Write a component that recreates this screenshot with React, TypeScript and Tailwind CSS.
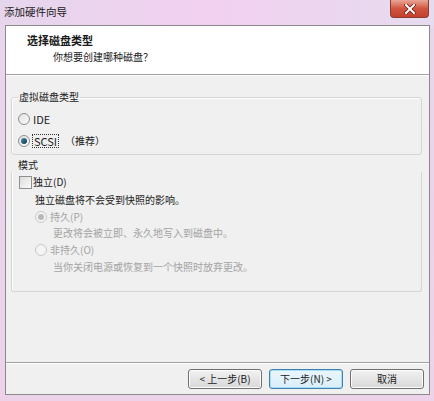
import type { ReactNode } from 'react';

const font = { fontFamily: '"Noto Sans CJK SC", "Noto Sans", sans-serif' };

function Radio({ checked, disabled }: { checked?: boolean; disabled?: boolean }) {
    return (
        <span
            className={`w-[12px] h-[12px] rounded-full border flex items-center justify-center shrink-0 ${
                disabled
                    ? 'border-[#c8c8c8] bg-[#f4f4f4]'
                    : 'border-[#8f8f8f] bg-gradient-to-br from-[#e2e2e2] to-[#fafafa]'
            }`}
        >
            {checked && (
                <span
                    className={`w-[6px] h-[6px] rounded-full ${
                        disabled ? 'bg-[#b8b8b8]' : 'bg-gradient-to-br from-[#4a8aa8] to-[#0f3a52]'
                    }`}
                />
            )}
        </span>
    );
}

function Row({ children, className = '' }: { children: ReactNode; className?: string }) {
    return <div className={`flex items-center h-[14px] ${className}`}>{children}</div>;
}

function Button({ children, focused }: { children: ReactNode; focused?: boolean }) {
    return (
        <button
            className={`w-[74px] h-[20px] rounded-[3px] border text-[10px] leading-[14px] text-[#1a1a1a] flex items-center justify-center ${
                focused
                    ? 'border-[#3c7fb1] bg-gradient-to-b from-[#eaf6fd] to-[#d9eefa] shadow-[inset_0_0_0_1px_#a9dcf5]'
                    : 'border-[#707070] bg-gradient-to-b from-[#f2f2f2] to-[#d8d8d8] shadow-[inset_0_0_0_1px_#fcfcfc]'
            }`}
        >
            {children}
        </button>
    );
}

export default function App() {
    return (
        <div
            style={font}
            className="w-[434px] h-[401px] flex flex-col bg-gradient-to-b from-[#e8d6ec] to-[#edd2ea] overflow-hidden"
        >
            {/* Title bar */}
            <div className="h-[25px] flex justify-between items-start bg-gradient-to-r from-[#e6d6ec] via-[#f2d0f0] to-[#e6dcef]">
                <span className="pl-[4px] pt-[5px] text-[10.5px] leading-[14px] text-[#202020]">添加硬件向导</span>
                <div className="mr-[5px] w-[39px] h-[18px] rounded-b-[4px] border border-t-0 border-[#8d3a30] bg-gradient-to-b from-[#e9a596] via-[#d0553f] to-[#c2402e] flex items-center justify-center">
                    <svg width="12" height="10" viewBox="0 0 12 10">
                        <path d="M2 1 L10 9 M10 1 L2 9" stroke="#6b1d14" strokeWidth="3.6" strokeLinecap="square" />
                        <path d="M2 1 L10 9 M10 1 L2 9" stroke="#ffffff" strokeWidth="2" strokeLinecap="square" />
                    </svg>
                </div>
            </div>

            {/* Client area */}
            <div className="ml-[5px] mr-[4px] mb-[6px] flex-1 flex flex-col border border-[#8a8a8a] bg-[#f0f0f0] text-[10px] leading-[14px] text-[#1a1a1a]">
                {/* Header */}
                <div className="h-[48px] bg-white pl-[21px] pt-[7px]">
                    <div className="font-bold text-[11px]">选择磁盘类型</div>
                    <div className="mt-[3px] pl-[26px]">你想要创建哪种磁盘？</div>
                </div>
                <div className="border-t border-[#a0a0a0] border-b border-b-white" />

                {/* Content */}
                <div className="flex-1 flex flex-col pl-[5px] pr-[7px]">
                    <fieldset className="mt-[14px] border border-[#d5d5d5] rounded-[3px] pb-[6px] shadow-[inset_1px_1px_0_#ffffff]">
                        <legend className="ml-[6px] px-[1px]">虚拟磁盘类型</legend>
                        <Row className="mt-[8px] pl-[6px] gap-[3px]">
                            <Radio />
                            <span className="text-[11px]">IDE</span>
                        </Row>
                        <Row className="mt-[8px] pl-[6px] gap-[2px]">
                            <Radio checked />
                            <span className="border border-dotted border-[#333] px-[1px] leading-[12px] text-[11px]">SCSI</span>
                            <span className="ml-[4px]">（推荐）</span>
                        </Row>
                    </fieldset>

                    <div className="mt-[3px] pl-[7px]">模式</div>
                    <div className="border-x border-b border-[#d5d5d5] rounded-b-[3px] pt-[3px] pb-[17px] shadow-[inset_1px_0_0_#ffffff]">
                        <Row className="pl-[7px] gap-[1px]">
                            <span className="w-[13px] h-[13px] border border-[#8f8f8f] bg-gradient-to-br from-[#dcdcdc] to-[#fbfbfb] shrink-0" />
                            <span>独立(D)</span>
                        </Row>
                        <Row className="mt-[4px] pl-[23px]">独立磁盘将不会受到快照的影响。</Row>
                        <Row className="mt-[3px] pl-[23px] gap-[3px] text-[#a3a3a3]">
                            <Radio checked disabled />
                            <span>持久(P)</span>
                        </Row>
                        <Row className="mt-[2px] pl-[41px] text-[#a3a3a3]">更改将会被立即、永久地写入到磁盘中。</Row>
                        <Row className="mt-[3px] pl-[23px] gap-[3px] text-[#a3a3a3]">
                            <Radio disabled />
                            <span>非持久(O)</span>
                        </Row>
                        <Row className="mt-[3px] pl-[41px] text-[#a3a3a3]">当你关闭电源或恢复到一个快照时放弃更改。</Row>
                    </div>
                    <div className="flex-1" />
                </div>

                {/* Footer */}
                <div className="border-t border-[#a0a0a0] border-b border-b-white" />
                <div className="flex justify-end gap-[7px] pr-[5px] pt-[5px] pb-[5px]">
                    <Button>&lt; 上一步(B)</Button>
                    <Button focused>下一步(N) &gt;</Button>
                    <Button>取消</Button>
                </div>
            </div>
        </div>
    );
}
